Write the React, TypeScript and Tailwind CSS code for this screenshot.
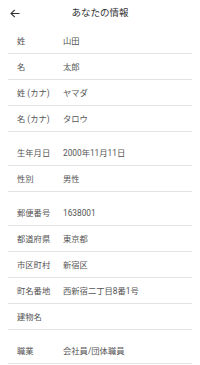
import React from "react";

type Row = { label: string; value: string };

const groups: Row[][] = [
  [
    { label: "姓", value: "山田" },
    { label: "名", value: "太郎" },
    { label: "姓 (カナ)", value: "ヤマダ" },
    { label: "名 (カナ)", value: "タロウ" },
  ],
  [
    { label: "生年月日", value: "2000年11月11日" },
    { label: "性別", value: "男性" },
  ],
  [
    { label: "郵便番号", value: "1638001" },
    { label: "都道府県", value: "東京都" },
    { label: "市区町村", value: "新宿区" },
    { label: "町名番地", value: "西新宿二丁目8番1号" },
    { label: "建物名", value: "" },
  ],
  [{ label: "職業", value: "会社員/団体職員" }],
];

export default function App() {
  return (
    <div
      className="w-[200px] h-[365px] overflow-hidden bg-white"
      style={{ fontFamily: 'Roboto, "Noto Sans CJK JP", sans-serif' }}
    >
      <div className="relative h-[28px] flex items-center justify-center">
        <svg
          className="absolute left-[10px] top-[9px]"
          width="10"
          height="9"
          viewBox="0 0 10 9"
          fill="none"
          stroke="#333"
          strokeWidth="1.1"
        >
          <path d="M9.5 4.5H1M4.8 0.8L1 4.5l3.8 3.7" />
        </svg>
        <span className="text-[9.5px] text-[#333] leading-none pb-[2px]">あなたの情報</span>
      </div>
      {groups.map((g, gi) => (
        <div key={gi} className={gi === 0 ? "" : "mt-[8px]"}>
          {g.map((r) => (
            <div
              key={r.label}
              className="mx-2 h-[26px] border-b border-[#e3e3e3] flex items-center pl-[9px] pt-[2px] text-[8.3px] leading-none"
            >
              <span className="w-[46px] shrink-0 text-[#555] whitespace-pre">{r.label}</span>
              <span className="text-[#555]">{r.value}</span>
            </div>
          ))}
        </div>
      ))}
    </div>
  );
}
